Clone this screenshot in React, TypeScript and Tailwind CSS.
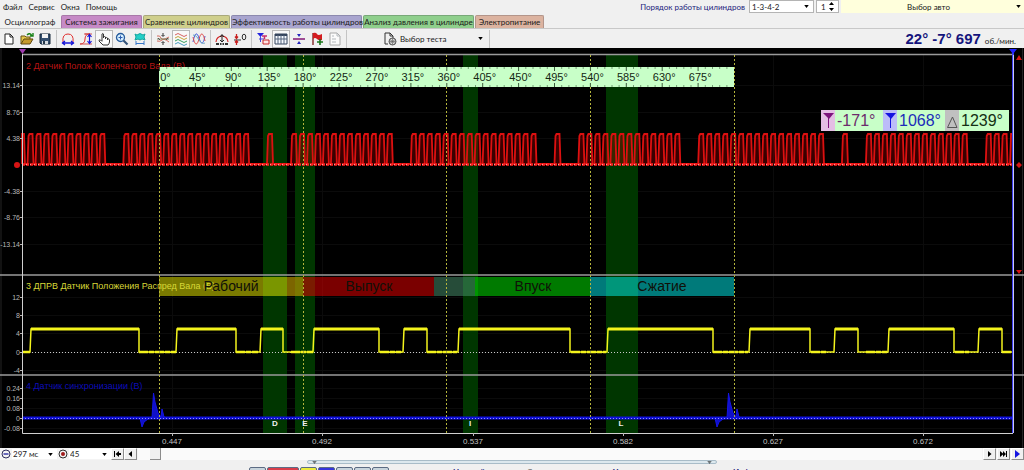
import type { ReactNode } from "react";
import clsx from "clsx";

const tabs = [
  { label: "Осциллограф", className: "w-[60px] bg-[#f0f0f0] border-transparent" },
  { label: "Система зажигания", className: "w-[81px] bg-[#c68ac6] border-[#a878a8]" },
  { label: "Сравнение цилиндров", className: "w-[87px] bg-[#cfcf8c] border-[#a9a97c]" },
  { label: "Эффективность работы цилиндров", className: "w-[131px] bg-[#a9a5cf] border-[#8c89ae]" },
  { label: "Анализ давления в цилиндре", className: "w-[111px] bg-[#8fcf8c] border-[#78a878]" },
  { label: "Электропитание", className: "w-[69px] bg-[#dcb3a0] border-[#b3958a]" },
];

const rulerMarks = Array.from({ length: 16 }, (_, i) => i * 45);
const degToX = (deg: number) => 159.5 + deg * 0.798;

// 36-2-2-2 trigger wheel: one slot every 10 degrees
const hasTooth = (slot: number) => {
  const k = ((slot % 36) + 36) % 36;
  return k < 16 || k === 18 || (k > 20 && k < 34);
};

const buildCrank = () => {
  let d = "M22 116V86H24L25 116";
  for (let k = -12; k < 111; k++) {
    if (!hasTooth(k)) continue;
    const x = 123.3 + k * 7.985;
    d += `H${x.toFixed(1)}L${(x + 1).toFixed(1)} 88L${(x + 2).toFixed(1)} 86H${(x + 5).toFixed(1)}L${(x + 6).toFixed(1)} 116`;
  }
  return d + "H1010L1011 86H1013V116";
};

const camPulses = [
  [30, 139], [176, 236], [260, 283], [313, 379], [403, 427], [458, 570],
  [607, 713], [749, 810], [834, 858], [888, 954], [978, 1002],
];
const camPath =
  "M22 304" + camPulses.map(([a, b]) => `H${a}L${a + 1} 281H${b}V304`).join("") + "H1013";

const strokes = [
  { name: "Рабочий", x: 159, width: 144, fill: "#ffff00", center: 231 },
  { name: "Выпуск", x: 303, width: 131, fill: "#ff0000", center: 369 },
  { name: "", x: 434, width: 41, fill: "#4f9f78", center: 455 },
  { name: "Впуск", x: 475, width: 115, fill: "#00ff00", center: 533 },
  { name: "Сжатие", x: 590, width: 144, fill: "#00ffff", center: 662 },
];

const bands = [
  { x: 263, width: 24, mark: "D", at: 275 },
  { x: 295, width: 20, mark: "E", at: 305 },
  { x: 463, width: 15, mark: "I", at: 470 },
  { x: 606, width: 32, mark: "L", at: 621 },
];

const levels: [string, number][] = [
  ["13.14", 37], ["8.76", 64], ["4.38", 90], ["-4.38", 143], ["-8.76", 169], ["-13.14", 196],
  ["12", 249], ["8", 267], ["4", 285], ["0", 304], ["-4", 322],
  ["0.24", 340], ["0.16", 350], ["0.08", 360], ["0", 370], ["-0.08", 380],
];

const times: [string, number][] = [
  ["0.447", 172], ["0.492", 322], ["0.537", 473], ["0.582", 623], ["0.627", 773], ["0.672", 923],
];

const Icon = ({ children, className = "size-3.5" }: { children: ReactNode; className?: string }) => (
  <svg viewBox="0 0 14 14" fill="none" className={clsx("shrink-0", className)} aria-hidden="true">
    {children}
  </svg>
);

const ToolButton = ({ label, pressed, children }: { label: string; pressed?: boolean; children: ReactNode }) => (
  <button
    type="button"
    aria-label={label}
    aria-pressed={pressed}
    className={clsx(
      "flex h-[18px] w-[18px] items-center justify-center border",
      pressed ? "border-[#b8b8b8] bg-[#f8f8f8]" : "border-transparent"
    )}
  >
    <Icon>{children}</Icon>
  </button>
);

const Separator = () => (
  <div className="flex h-[18px] w-[5px] justify-center">
    <div className="w-px bg-[#c4c4c4]" />
  </div>
);

const Caret = ({ className }: { className?: string }) => (
  <svg viewBox="0 0 6 4" className={clsx("pointer-events-none h-[3px] w-[5px] shrink-0", className)} aria-hidden="true">
    <path d="M0 0H6L3 4Z" fill="#000" />
  </svg>
);

const Picker = ({ label, value, className, selectClass }: { label: string; value: string; className?: string; selectClass?: string }) => (
  <div className={clsx("flex items-center", className)}>
    <select aria-label={label} className={clsx("min-w-0 flex-1 appearance-none bg-transparent outline-none", selectClass)}>
      <option>{value}</option>
    </select>
    <Caret />
  </div>
);

const Toolbar = () => (
  <div className="flex h-5 items-center border-t border-[#c8c8c8] bg-[#f0f0f0]">
    <ToolButton label="Новый">
      <path d="M3 2H8L11 5V12H3Z" fill="#fff" stroke="#222" />
      <path d="M8 2V5H11" stroke="#222" />
    </ToolButton>
    <ToolButton label="Открыть">
      <path d="M1 12V4H5L6 5H10V8" fill="#e6c84c" stroke="#6b5518" />
      <path d="M1 12L4 7H13L10 12Z" fill="#c79b2c" stroke="#5e4710" />
      <path d="M7 3Q10 0 12 4M10 4H13V1" stroke="#158015" strokeWidth="1.4" />
    </ToolButton>
    <ToolButton label="Сохранить">
      <path d="M2 2H12V12H3L2 11Z" fill="#355070" stroke="#152638" />
      <path d="M4 2H10V6H4Z" fill="#f4f4f4" />
      <path d="M4 9H10V12H4Z" fill="#d6dbe0" />
      <path d="M5 9H7V12H5Z" fill="#26384a" />
    </ToolButton>
    <Separator />
    <ToolButton label="Период">
      <path d="M2 10Q1 2 7 2Q13 2 12 10" stroke="#e03030" />
      <path d="M1 11H13M4 9L1.500 11L4 13M10 9L12.500 11L10 13" stroke="#1717d8" strokeWidth="1.300" />
    </ToolButton>
    <ToolButton label="Амплитуда">
      <path d="M1 12Q6 12 6 7T11 2H6" stroke="#e03030" />
      <path d="M1 12H13M5 2H13" stroke="#d05050" />
      <path d="M10.500 3V11M8.500 5L10.500 2.500L12.500 5M8.500 9L10.500 11.500L12.500 9" stroke="#1717d8" strokeWidth="1.200" />
    </ToolButton>
    <ToolButton label="Рука" pressed>
      <path d="M5 9V2Q6 1 6.500 2V6V5Q7.500 4 8.500 5V7V6Q9.500 5 10.500 6V8V7Q12 6 12.500 8V10Q12 12 11 13H6L2 9Q2 7 3.500 8L5 9.500" fill="#fff" stroke="#333" />
    </ToolButton>
    <ToolButton label="Лупа">
      <circle cx="5.500" cy="5.500" r="4" fill="#d5efff" stroke="#265b9c" strokeWidth="1.300" />
      <path d="M3.500 5.500H7.500M5.500 3.500V7.500" stroke="#2c5cb0" />
      <path d="M8.500 8.500L12.500 12.500" stroke="#345378" strokeWidth="2.200" />
    </ToolButton>
    <ToolButton label="Измерение">
      <path d="M2 2L4 3Q7 0 10 3L12 2L11 5L12 8L9 7Q7 9 5 7L2 8L3 5Z" fill="#22d0c8" stroke="#16a59f" />
      <path d="M3 9V13M11 9V13M3 11.500H11" stroke="#3878c8" />
    </ToolButton>
    <Separator />
    <ToolButton label="Сжать сигналы">
      <path d="M7 1V4M5.500 3L7 4.500L8.500 3M7 13V10M5.500 11L7 9.500L8.500 11" stroke="#333" />
      <path d="M1 4Q4 3 5 6T13 5M1 9Q4 10 6 8T13 10" stroke="#d36c60" />
      <path d="M1 7H13" stroke="#7c8b61" />
      <path d="M2 6L4 8M12 6L10 8" stroke="#555" />
    </ToolButton>
    <ToolButton label="Разделить сигналы" pressed>
      <path d="M1 3Q4 0 7 3T13 3" stroke="#d66262" />
      <path d="M1 6Q4 3 7 6T13 6" stroke="#c7a33c" />
      <path d="M1 9Q4 6 7 9T13 9" stroke="#38a060" />
      <path d="M1 12Q4 9 7 12T13 12" stroke="#4a9ac0" />
    </ToolButton>
    <ToolButton label="Наложить сигналы">
      <path d="M1 10C3 0 5 0 7 6S11 14 13 4" stroke="#3d55df" />
      <path d="M1 5C3 14 5 14 7 7S11 0 13 9" stroke="#e04848" />
      <path d="M1 3C4 3 5 5 7 8S11 12 13 11" stroke="#68a5c0" />
    </ToolButton>
    <Separator />
    <ToolButton label="Автоматически">
      <path d="M1 10A6 6 0 1 1 13 10" stroke="#d32d2d" strokeWidth="1.200" />
      <path d="M7 3V9M5 5L7 2.500L9 5M5 8L7 10L9 8" stroke="#222" />
      <path d="M1 12H4M5 12H6.500M7.500 12H9M10 12H13" stroke="#333" strokeWidth="2" />
    </ToolButton>
    <ToolButton label="Обнулить">
      <path d="M1 8H8" stroke="#333" />
      <path d="M3.500 2V6M2 4.500L3.500 6.500L5 4.500M3.500 13V9M2 10.500L3.500 8.500L5 10.500" stroke="#c82020" strokeWidth="1.300" />
      <ellipse cx="11" cy="5" rx="1.800" ry="2.800" stroke="#333" />
    </ToolButton>
    <Separator />
    <ToolButton label="Маркеры">
      <path d="M1 1H8L4.500 5Z" fill="#2222df" />
      <path d="M4.500 4V10M3 7H8" stroke="#4444df" />
      <path d="M6 4H11M8.500 4V7" stroke="#c52e6e" strokeWidth="1.500" />
      <path d="M7 8H13V12H7Z" fill="#ffe6e6" stroke="#c82828" />
    </ToolButton>
    <ToolButton label="Таблица" pressed>
      <path d="M1 2H13V12H1Z" fill="#f6faff" stroke="#34445c" />
      <path d="M1 3H13" stroke="#34445c" strokeWidth="2" />
      <path d="M1 7H13M4 3V12M7 3V12M10 3V12" stroke="#54647c" />
    </ToolButton>
    <ToolButton label="Деление">
      <path d="M1 7H13" stroke="#8a237d" strokeWidth="1.600" />
      <path d="M5 2H9L7 5ZM5 12H9L7 9Z" fill="#2525bd" />
    </ToolButton>
    <ToolButton label="Флажок">
      <path d="M3 1V13" stroke="#7c1616" strokeWidth="1.300" />
      <path d="M3 1Q6 0 7 2T12 2V8Q9 9 7 7T3 7Z" fill="#d31c20" />
      <path d="M10 7V13M7 10H13" stroke="#18751a" strokeWidth="1.600" />
    </ToolButton>
    <ToolButton label="Отчёт">
      <path d="M2 1H9L12 4V13H2Z" fill="#fbfbfb" stroke="#a8a8a8" />
      <path d="M9 1V4H12M4 4H6M4 7H8M4 10H8" stroke="#b3b8bc" />
    </ToolButton>
    <Separator />
    <div className="flex w-[138px] items-center pr-1 pl-[34px]">
      <Icon>
        <path d="M2 12V1H7L10 4V6M7 1V4H10M2 12H5" stroke="#333" />
        <circle cx="9.500" cy="9.500" r="3.500" fill="#ddd" stroke="#555" />
        <path d="M6 9.500H13M9.500 6V13M7 7.500L12 11.500M7 11.500L12 7.500" stroke="#666" strokeWidth="0.700" />
      </Icon>
      <Picker label="Тест" value="Выбор теста" className="flex-1 pl-[3px]" />
    </div>
    <Separator />
    <output className="ml-auto flex items-baseline gap-1 pr-2 text-[#14147c]">
      <span className="font-['Liberation_Sans',Arial,sans-serif] text-[15px] leading-none font-bold">22° -7° 697</span>
      <span className="text-[#222]">об./мин.</span>
    </output>
  </div>
);

const Plot = () => (
  <svg
    viewBox="0 0 1024 400"
    className="block w-full font-['Liberation_Sans',Arial,sans-serif]"
    role="img"
    aria-label="Осциллограмма"
  >
    <rect width="1024" height="400" fill="#000" />
    <path d="M1 0V400M1022.500 0V400" stroke="#242424" />

    {/* grid */}
    <g stroke="#0b0b0b">
      {times.map(([t, x]) => <path key={t} d={`M${x + 0.5} 7V385`} />)}
      {levels.map(([, y], i) => <path key={i} d={`M23 ${y + 0.5}H1013`} />)}
    </g>

    {bands.map((b) => <rect key={b.mark} x={b.x} y="7" width={b.width} height="378" fill="#003600" />)}

    {/* stroke phases */}
    {strokes.map((s) => (
      <rect key={s.x} x={s.x} y="229" width={s.width} height="19" fill={s.fill} fillOpacity="0.48" />
    ))}
    <rect x="287" y="229" width="16" height="19" fill="#804000" fillOpacity="0.35" />

    <g stroke="#9a9a9a" strokeWidth="1.500">
      <path d="M22 6.500H1013M0 227H1024M0 327H1024" />
    </g>

    <g fontSize="9">
      <text x="26" y="21" fill="#b81414">2 Датчик Полож Коленчатого Вала (В)</text>
      <text x="26" y="241" fill="#d8d838">3 ДПРВ Датчик Положения Распред Вала (В)</text>
      <text x="26" y="341" fill="#0c0cb8">4 Датчик синхронизации (В)</text>
    </g>
    <g fontSize="14" textAnchor="middle" fill="#101008">
      {strokes.map((s) => <text key={s.x} x={s.center} y="243">{s.name}</text>)}
    </g>

    {/* signals */}
    <path d={buildCrank()} stroke="#dc1010" strokeWidth="1.800" fill="#c00000" fillOpacity="0.3" />
    <path d="M22 116.500H1013" stroke="#ff2020" strokeWidth="2.500" strokeDasharray="3 1" />
    <path d="M22 116.500H1013" stroke="#f0a0a0" strokeDasharray="1 3" />
    <path d="M23 304.500H1013" stroke="#c8c8c8" strokeDasharray="1 2" />
    <path d={camPath} stroke="#f4f41c" strokeWidth="1.500" fill="none" />
    {camPulses.map(([a, b]) => (
      <path key={a} d={`M${a + 1} 281H${b}`} stroke="#f4f41c" strokeWidth="3" />
    ))}
    <path d="M23 304H30M139 304H176M236 304H258M291 304H313M380 304H401M427 304H457M571 304H606M713 304H748M811 304H826M866 304H887M955 304H969M1002 304H1012" stroke="#f4f41c" strokeWidth="2.500" strokeDasharray="9 1 5 1" />
    <path d="M22 370H1013" stroke="#1010dc" strokeWidth="3" />
    {[0, 575].map((dx) => (
      <path
        key={dx}
        transform={`translate(${dx} 0)`}
        d="M140 370L142 379L144 374L148 371L152 370L153.500 345L155 354L158 365L161 369L162 361L164 369L167 370Z"
        fill="#1010c8"
        stroke="#1414e8"
      />
    ))}
    <path d="M22 370.500H1013" stroke="#9090ff" strokeDasharray="1 2" />

    {/* angle cursors */}
    <g stroke="#b4b43c" strokeDasharray="2 2">
      {[159, 303, 446, 590, 734].map((x) => <path key={x} d={`M${x + 0.5} 7V385`} />)}
    </g>

    {/* axes */}
    <path d="M22.500 6V385.500H1013" stroke="#d0d0d0" fill="none" />
    <path d="M1013 3V385" stroke="#3c3cf0" strokeWidth="2" />
    <path d="M1013.500 7V385" stroke="#c8c8f4" />
    <g fill="#b8b8b8" fontSize="7" textAnchor="end">
      {levels.map(([v, y], i) => (
        <g key={i}>
          <text x="20" y={y + 3}>{v}</text>
          <path d={`M20 ${y + 0.5}H22`} stroke="#b8b8b8" />
        </g>
      ))}
    </g>
    <g fill="#c0c0c0" fontSize="8" textAnchor="middle">
      {times.map(([t, x]) => (
        <g key={t}>
          <text x={x} y="396">{t}</text>
          <path d={`M${x + 0.5} 385V388`} stroke="#b8b8b8" />
        </g>
      ))}
    </g>
    <g fill="#f0f0f0" fontSize="8" fontWeight="bold" textAnchor="middle">
      {bands.map((b) => <text key={b.mark} x={b.at} y="378">{b.mark}</text>)}
    </g>

    {/* markers */}
    <path d="M19 1H26L22.500 6Z" fill="#a03cb0" />
    <path d="M1009 1H1017L1013 6Z" fill="#2020ff" />
    <path d="M1016 12L1019 7L1022 12ZM1016 117L1019 114L1022 117L1019 120ZM1016 222H1022L1019 226ZM14 117A3 3 0 1 1 20 117A3 3 0 1 1 14 117Z" fill="#d81414" />

    {/* crank angle ruler */}
    <rect x="159" y="19" width="575" height="20" fill="#c8ffc8" />
    <g stroke="#3c5c3c">
      {Array.from({ length: 80 }, (_, i) => {
        const x = degToX(i * 9).toFixed(1);
        const len = i % 5 === 0 ? 4 : 2;
        return <path key={i} d={`M${x} 19v${len}M${x} 39v-${len}`} strokeWidth={i % 5 === 0 ? 1 : 0.6} />;
      })}
    </g>
    <g fontSize="11" textAnchor="middle" fill="#142814">
      {rulerMarks.map((deg) => (
        <text key={deg} x={degToX(deg) + (deg === 0 ? 6 : 2)} y="33">{deg}°</text>
      ))}
    </g>
  </svg>
);

const Readout = () => (
  <div className="absolute top-[62px] right-[15px] flex h-[21px] w-[188px] bg-[#c8ffc8] font-['Liberation_Sans',Arial,sans-serif] text-base leading-[21px]">
    <svg viewBox="0 0 14 21" className="w-3.5 bg-[#e4bfe4]" aria-hidden="true">
      <path d="M2 3H13L8 9Z" fill="#7c147c" />
      <path d="M7.500 8V18" stroke="#7c147c" />
    </svg>
    <span className="w-12 pl-0.5 text-[#6c2c6c]">-171°</span>
    <svg viewBox="0 0 14 21" className="w-3.5 bg-[#bcbcf8]" aria-hidden="true">
      <path d="M2 3H13L8 9Z" fill="#1414e0" />
      <path d="M7.500 8V18" stroke="#1414e0" />
    </svg>
    <span className="w-12 pl-0.5 text-[#1c2cb8]">1068°</span>
    <svg viewBox="0 0 14 21" className="w-3.5" aria-hidden="true">
      <rect width="14" height="21" fill="#c0c0c0" />
      <path d="M2.500 17.500L7.500 7L12 17.500Z" fill="none" stroke="#555" />
    </svg>
    <span className="flex-1 pl-0.5 text-[#143014]">1239°</span>
  </div>
);

const NavButton = ({ label, children }: { label: string; children: ReactNode }) => (
  <button
    type="button"
    aria-label={label}
    className="flex h-3 w-[13px] items-center justify-center border border-[#fff] border-r-[#8c8c8c] border-b-[#8c8c8c] bg-[#f0f0f0]"
  >
    <svg viewBox="0 0 9 8" className="h-2 w-[9px]" aria-hidden="true">{children}</svg>
  </button>
);

const channels = [
  "w-[17px] bg-[#c8d4dc]",
  "w-8 bg-[#d83c48]",
  "w-[17px] bg-[#ecec3c]",
  "w-[17px] bg-[#3434dc]",
  "w-[17px] bg-[#c8d4dc]",
  "w-[17px] bg-[#c8d4dc]",
  "w-[17px] bg-[#c8d4dc]",
];

export default function App() {
  return (
    <div className="flex h-screen flex-col overflow-hidden bg-[#f0f0f0] font-[Lato,'Liberation_Sans',sans-serif] text-[8px] leading-[10px] text-[#1a1a1a]">
      <header className="flex h-[14px] shrink-0">
        <nav className="flex items-center gap-[6px] pl-[3px]">
          {["Файл", "Сервис", "Окна", "Помощь"].map((item) => (
            <button key={item} type="button">{item}</button>
          ))}
        </nav>
        <div className="ml-auto flex">
          <label htmlFor="order" className="pt-0.5 pr-1 text-[#22227c]">Порядок работы цилиндров</label>
          <div className="mr-0.5 flex h-[13px] w-[65px] items-center border border-[#b4b4b4] bg-white pr-1 pl-0.5">
            <select id="order" className="min-w-0 flex-1 appearance-none outline-none">
              <option>1-3-4-2</option>
            </select>
            <Caret />
          </div>
          <div className="mr-0.5 flex h-[13px] w-[23px] items-center justify-between border border-[#b4b4b4] bg-white pr-1 pl-1">
            <input aria-label="Номер цилиндра" defaultValue="1" className="w-2 outline-none" />
            <svg viewBox="0 0 5 9" className="h-[9px] w-[5px]" aria-hidden="true">
              <path d="M0 3L2.500 0L5 3ZM0 6L2.500 9L5 6Z" />
            </svg>
          </div>
          <Picker
            label="Автомобиль"
            value="Выбор авто"
            className="h-[13px] w-[183px] bg-[#ffffdc] pr-[3px]"
            selectClass="text-center"
          />
        </div>
      </header>

      <div role="tablist" className="flex h-[14px] shrink-0 items-end gap-px">
        {tabs.map((tab, i) => (
          <button
            key={tab.label}
            type="button"
            role="tab"
            aria-selected={i === 0}
            className={clsx("h-[13px] rounded-t-[2px] border border-b-0 text-center whitespace-nowrap", tab.className)}
          >
            {tab.label}
          </button>
        ))}
      </div>

      <div className="shrink-0">
        <Toolbar />
      </div>

      <main className="relative shrink-0">
        <Plot />
        <Readout />
      </main>

      <div className="flex h-3 shrink-0 items-center bg-[#f4f4f4]">
        <button type="button" aria-label="Уменьшить развёртку" className="flex w-3 justify-center">
          <svg viewBox="0 0 10 10" className="size-2.5" fill="none">
            <circle cx="5" cy="5" r="4" stroke="#303060" />
            <path d="M2.500 5H7.500" stroke="#2020a0" strokeWidth="1.300" />
          </svg>
        </button>
        <Picker label="Развёртка" value="297 мс" className="w-[45px] bg-white pr-1 pl-px" />
        <button type="button" aria-label="Запись" className="flex w-3 justify-center">
          <svg viewBox="0 0 10 10" className="size-2.5" fill="none">
            <circle cx="5" cy="5" r="4" stroke="#303030" />
            <circle cx="5" cy="5" r="2" fill="#a01c1c" />
          </svg>
        </button>
        <Picker label="Скорость" value="45" className="w-[42px] bg-white pr-1 pl-px" />
        <NavButton label="В начало"><path d="M1 1H2V7H1ZM6 1V7L2.500 4ZM6 3H8V5H6Z" /></NavButton>
        <NavButton label="Назад"><path d="M6 1V7L2.500 4Z" /></NavButton>
        <div className="mx-px flex h-3 flex-1 bg-[#fafafa] pl-3">
          <div className="h-3 w-[11px] border-r border-b border-[#8c8c8c] bg-[#f0f0f0]" />
        </div>
        <div className="flex gap-px">
          <NavButton label="Вперёд"><path d="M3 1V7L6.500 4Z" /></NavButton>
          <NavButton label="В конец"><path d="M1 1V7L4.500 4ZM7 1H8V7H7ZM4 1V7L7 4Z" /></NavButton>
          <NavButton label="Пуск"><path d="M2 0V8L7 4Z" fill="#1414e0" /></NavButton>
        </div>
      </div>

      <div className="flex shrink-0 justify-center">
        <div className="flex h-1 w-2/5 items-center justify-between rounded-sm border border-[#a8bcc8] bg-[#dce8ee] px-1">
          <Caret className="opacity-50" />
          <Caret className="opacity-50" />
        </div>
      </div>

      <footer className="flex items-start pt-[3px] pl-[249px]">
        <div className="flex gap-px">
          {channels.map((c, i) => (
            <button key={i} type="button" aria-label={`Канал ${i + 1}`} className={clsx("h-4 rounded-t-[2px] border border-[#5c6c84]", c)} />
          ))}
        </div>
        <div className="ml-16 flex font-bold text-[#22227c]">
          <span className="w-[74px]">Настройки</span>
          <span className="w-[86px] font-normal text-[#666]">Синхронизация</span>
          <span className="w-[120px]">Управление</span>
          <span>Информация</span>
        </div>
      </footer>
    </div>
  );
}
